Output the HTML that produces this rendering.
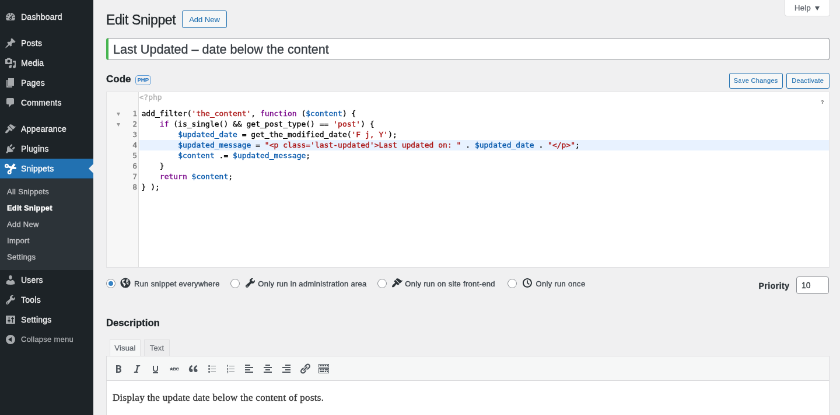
<!DOCTYPE html>
<html lang="en">
<head>
<meta charset="utf-8">
<title>Edit Snippet</title>
<style>
html,body{margin:0;padding:0;background:#f0f0f1;overflow:hidden;}
body{width:840px;height:415px;position:relative;}
#stage{position:absolute;left:0;top:0;width:1440px;height:712px;transform:scale(0.583333);transform-origin:0 0;will-change:transform;
  font-family:"Liberation Sans",Arial,sans-serif;font-size:13px;line-height:1.4;color:#3c434a;background:#f0f0f1;overflow:hidden;-webkit-text-stroke:0.35px currentColor;}
#stage *{box-sizing:border-box;}
/* ---------- sidebar ---------- */
#menu{position:absolute;left:0;top:0;width:160px;height:712px;background:#1d2327;}
#menu .mi{position:absolute;left:0;width:160px;height:34px;color:#f0f0f1;font-size:14px;line-height:34px;padding-left:36px;white-space:nowrap;letter-spacing:.25px;}
#menu .mi svg{position:absolute;left:8px;top:7px;width:20px;height:20px;fill:#a7aaad;}
#menu .mi.cur{background:#2271b1;color:#fff;}
#menu .mi.cur svg{fill:#fff;}
#menu .mi.cur:after{content:"";position:absolute;right:0;top:9px;border:8px solid transparent;border-right-color:#f0f0f1;}
#menu .sub{position:absolute;left:0;top:306.5px;width:160px;height:156px;background:#2c3338;}
#menu .si{position:absolute;left:12px;color:#c3c4c7;font-size:13px;line-height:18px;white-space:nowrap;letter-spacing:.28px;margin-top:-.500px;}
#menu .si.on{color:#fff;font-weight:bold;letter-spacing:.15px;}
#menu .col{color:#a7aaad;font-size:13px;}
/* ---------- content ---------- */
#help{position:absolute;left:1345px;top:-1px;width:77.500px;height:29.300px;background:#fff;border:1px solid #dcdcde;border-top:none;border-radius:0 0 4px 4px;color:#646970;font-size:13px;line-height:29.500px;padding-left:16px;letter-spacing:.3px;}
#help i{position:absolute;left:51px;top:11.500px;border:4.800px solid transparent;border-top:7.500px solid #50575e;border-bottom:none;}
h1{position:absolute;left:182px;top:19px;margin:0;letter-spacing:-.4px;font-size:23px;font-weight:400;line-height:30px;color:#1d2327;white-space:nowrap;}
.btn{position:absolute;border:1px solid #2271b1;border-radius:3px;background:#f6f7f7;color:#2271b1;font-size:13px;white-space:nowrap;text-align:center;-webkit-text-stroke:.15px currentColor;}
#addnew{left:312px;top:18px;width:77px;height:30px;line-height:29px;}
#title{position:absolute;left:182px;top:65px;width:1240px;height:38px;background:#fff;border:1px solid #8c8f94;border-left:4px solid #46b450;border-radius:4px;font-size:21.600px;line-height:38.400px;padding-left:8px;color:#353b41;white-space:nowrap;}
h2{position:absolute;margin:0;font-size:17px;font-weight:bold;color:#1d2327;line-height:24px;white-space:nowrap;}
#php{position:absolute;left:231.500px;top:128.600px;width:27.500px;height:17px;border:1.700px solid #5a9ad6;border-radius:5px;color:#2b79c2;font-size:9.500px;font-weight:bold;line-height:13.800px;text-align:center;-webkit-text-stroke:.2px currentColor;}
#save{left:1249.500px;top:125.300px;width:92.500px;height:26.500px;line-height:24.500px;font-size:11px;letter-spacing:.3px;}
#deact{left:1347.500px;top:125.300px;width:74.500px;height:26.500px;line-height:24.500px;font-size:11px;letter-spacing:.3px;}
/* code editor */
#cm{position:absolute;left:182px;top:156.500px;width:1240px;height:302.500px;background:#fff;border:1px solid #e2e2e4;overflow:hidden;}
#cm .gut{position:absolute;left:0;top:0;width:55px;height:300px;background:#f7f7f7;border-right:1px solid #ddd;}
#cm .php0{position:absolute;left:55.500px;top:0px;font-family:"DejaVu Sans Mono","Liberation Mono",monospace;font-size:13px;line-height:18px;color:#b0b0b0;}
#cm .hl{position:absolute;left:56px;top:82.500px;width:1182px;height:18px;background:#e8f2ff;}
#cm .hlg{position:absolute;left:0;top:82px;width:55px;height:18px;background:#e8f2ff;}
#cm pre{position:absolute;margin:0;left:59.500px;top:28.600px;font-family:"DejaVu Sans Mono","Liberation Mono",monospace;font-size:13px;line-height:18px;color:#000;}
#cm .ln{position:absolute;left:30px;top:28.600px;width:22px;text-align:right;font-family:"DejaVu Sans Mono","Liberation Mono",monospace;font-size:13px;line-height:18px;color:#777;white-space:pre;}
#cm .fold{position:absolute;left:16.500px;color:#999;font-size:11.500px;line-height:18px;-webkit-text-stroke:0;}
.k{color:#708;} .v{color:#05a;} .s{color:#a11;}
#cm .q{position:absolute;right:8.500px;top:11px;font-size:9px;line-height:12px;color:#666;font-weight:bold;-webkit-text-stroke:0;}
/* scope row */
.rad{position:absolute;top:478.300px;width:16px;height:16px;border:1px solid #8c8f94;border-radius:50%;background:#fff;}
.rad.on:after{content:"";position:absolute;left:3px;top:3px;width:8px;height:8px;border-radius:50%;background:#3582c4;}
.rl{position:absolute;top:477.500px;font-size:13px;line-height:18px;color:#3c434a;white-space:nowrap;letter-spacing:.3px;}
.ric{position:absolute;top:475.300px;width:20px;height:20px;fill:#2c3338;}
#prl{position:absolute;left:1300.500px;top:480px;font-size:14px;font-weight:bold;color:#2c3338;line-height:20px;letter-spacing:.5px;white-space:nowrap;}
#pri{position:absolute;left:1365px;top:473.500px;width:56px;height:30px;border:1px solid #8c8f94;border-radius:4px;background:#fff;font-size:14px;line-height:28px;padding-left:8px;color:#2c3338;}
/* editor */
.tab{position:absolute;top:582.300px;height:29px;border:1px solid #e0e0e2;border-bottom:none;font-size:13px;line-height:27.500px;color:#646970;text-align:center;letter-spacing:.2px;-webkit-text-stroke:.2px currentColor;}
#tv{left:187.600px;width:53.700px;background:#f6f7f7;color:#5a6068;height:30px;}
#tt{left:247.300px;width:43.500px;background:#ededee;}
#tb{position:absolute;left:182px;top:610px;width:1240px;height:43px;background:#f6f7f7;border:1px solid #dcdcde;}
#tb svg{position:absolute;top:10.500px;width:20px;height:20px;fill:#50575e;}
#ed{position:absolute;left:182px;top:652px;width:1240px;height:80px;background:#fff;border:1px solid #dcdcde;border-top:1.500px solid #d5d5d7;}
#ed p{position:absolute;left:10px;top:17px;margin:0;font-family:"Liberation Serif",Georgia,serif;font-size:17px;line-height:24px;color:#333;white-space:nowrap;letter-spacing:.3px;}
</style>
</head>
<body>
<div id="stage">
  <div id="menu">
    <div class="mi" style="top:12px"><svg viewBox="0 0 20 20"><path d="M3.76 16h12.48A7.998 7.998 0 0 0 10 3a7.998 7.998 0 0 0-6.24 13zM10 4c.55 0 1 .45 1 1s-.45 1-1 1-1-.45-1-1 .45-1 1-1zM6 6c.55 0 1 .45 1 1s-.45 1-1 1-1-.45-1-1 .45-1 1-1zm8 0c.55 0 1 .45 1 1s-.45 1-1 1-1-.45-1-1 .45-1 1-1zm-5.37 5.55L12 7v6c0 1.1-.9 2-2 2s-2-.9-2-2c0-.57.24-1.08.63-1.45zM4 10c.55 0 1 .45 1 1s-.45 1-1 1-1-.45-1-1 .45-1 1-1zm12 0c.55 0 1 .45 1 1s-.45 1-1 1-1-.45-1-1 .45-1 1-1zm-5 3c0-.55-.45-1-1-1s-1 .45-1 1 .45 1 1 1 1-.45 1-1z"/></svg>Dashboard</div>
    <div class="mi" style="top:57px"><svg viewBox="0 0 20 20"><path d="M10.44 3.02l1.82-1.82 6.36 6.35-1.83 1.82c-1.05-.68-2.48-.57-3.41.36l-.75.75c-.92.93-1.04 2.35-.35 3.41l-1.83 1.82-2.41-2.41-2.8 2.79c-.42.42-3.38 2.71-3.8 2.29s1.86-3.39 2.28-3.81l2.79-2.79L4.1 9.36l1.83-1.82c1.05.69 2.48.57 3.4-.36l.75-.75c.93-.92 1.05-2.35.36-3.41z"/></svg>Posts</div>
    <div class="mi" style="top:91px"><svg viewBox="0 0 20 20"><path d="M13 11V4c0-.55-.45-1-1-1h-1.67L9 1H5L3.67 3H2c-.55 0-1 .45-1 1v7c0 .55.45 1 1 1h10c.55 0 1-.45 1-1zM7 4.5c1.38 0 2.5 1.12 2.5 2.5S8.380 9.5 7 9.500 4.500 8.380 4.500 7 5.620 4.500 7 4.500zM14 6h5v10.500c0 1.380-1.120 2.500-2.500 2.500S14 17.880 14 16.500s1.120-2.500 2.500-2.500c.170 0 .340.020.500.050V9h-3V6zm-4 8.050V13h2v3.500c0 1.380-1.120 2.500-2.500 2.500S7 17.880 7 16.500 8.120 14 9.500 14c.170 0 .340.020.500.050z"/></svg>Media</div>
    <div class="mi" style="top:125px"><svg viewBox="0 0 20 20"><path d="M6 15V2h10v13H6zm-1 1h8v2H3V5h2v11z"/></svg>Pages</div>
    <div class="mi" style="top:159px"><svg viewBox="0 0 20 20"><path d="M5 2h9c1.100 0 2 .900 2 2v7c0 1.100-.900 2-2 2h-2l-5 5v-5H5c-1.100 0-2-.900-2-2V4c0-1.100.900-2 2-2z"/></svg>Comments</div>
    <div class="mi" style="top:204px"><svg viewBox="0 0 20 20"><path d="M14.480 11.060L7.410 3.990l1.500-1.500c.500-.560 2.300-.470 3.510.320 1.210.800 1.430 1.280 2.910 2.100 1.180.640 2.450 1.260 4.450.850zm-.710.710L6.700 4.700 4.930 6.470c-.390.390-.390 1.020 0 1.410l1.060 1.060c.390.390.390 1.030 0 1.420-.600.600-1.430 1.110-2.210 1.690-.350.260-.700.530-1.010.840C1.430 14.230.400 16.080 1.400 17.070c.990 1 2.840-.030 4.180-1.360.310-.310.580-.660.850-1.020.570-.780 1.080-1.610 1.690-2.210.390-.390 1.020-.390 1.410 0l1.060 1.060c.390.390 1.020.390 1.410 0z"/></svg>Appearance</div>
    <div class="mi" style="top:238px"><svg viewBox="0 0 20 20"><path d="M13.110 4.360L9.870 7.600 8 5.730l3.240-3.240c.350-.340 1.050-.200 1.560.320.520.510.660 1.210.310 1.550zm-8 1.770l.910-1.120 9.010 9.010-1.190.840c-.710.710-2.630 1.160-3.820 1.160H6.140L4.900 17.260c-.590.590-1.540.590-2.120 0-.590-.580-.590-1.530 0-2.120l1.240-1.240v-3.880c0-1.130.400-3.190 1.090-3.890zm7.260 3.970l3.240-3.240c.340-.350 1.040-.210 1.550.310.520.510.660 1.210.310 1.550l-3.240 3.250z"/></svg>Plugins</div>
    <div class="mi cur" style="top:272px"><svg viewBox="0 0 20 20"><circle cx="3.500" cy="5.400" r="2.400" fill="none" stroke="#fff" stroke-width="2.400"/><circle cx="8.200" cy="16.200" r="2.400" fill="none" stroke="#fff" stroke-width="2.400"/><path d="M5.600 4.800L11.300 6.400 15.400 1.200 18.600 3.200 15.800 7.000 19.800 7.400 19.800 11.100 13.600 10.700 10.400 15.200 7.600 13.500 10.000 9.800 5.000 7.800z"/></svg>Snippets</div>
    <div class="sub"></div>
    <div class="si" style="top:320px">All Snippets</div>
    <div class="si on" style="top:348px">Edit Snippet</div>
    <div class="si" style="top:376px">Add New</div>
    <div class="si" style="top:404px">Import</div>
    <div class="si" style="top:432px">Settings</div>
    <div class="mi" style="top:462.7px"><svg viewBox="0 0 20 20"><path d="M10 9.250c-2.270 0-2.730-3.440-2.730-3.440C7 4.020 7.820 2 9.970 2c2.160 0 2.980 2.020 2.710 3.810 0 0-.410 3.440-2.680 3.440zm0 2.570L12.720 10c2.390 0 4.520 2.330 4.520 4.530v2.490s-3.650 1.130-7.240 1.130c-3.650 0-7.240-1.130-7.240-1.130v-2.490c0-2.250 1.940-4.480 4.470-4.480z"/></svg>Users</div>
    <div class="mi" style="top:496.7px"><svg viewBox="0 0 20 20"><path d="M16.680 9.770c-1.340 1.340-3.300 1.670-4.950.990l-5.410 6.520c-.990.990-2.590.990-3.580 0s-.990-2.590 0-3.570l6.520-5.420c-.680-1.650-.350-3.610.990-4.950 1.280-1.280 3.120-1.620 4.720-1.060l-2.890 2.890 2.820 2.820 2.860-2.870c.530 1.580.180 3.390-1.080 4.650zM3.810 16.210c.400.390 1.040.390 1.430 0 .400-.400.400-1.040 0-1.430-.390-.400-1.030-.400-1.430 0-.390.390-.390 1.030 0 1.430z"/></svg>Tools</div>
    <div class="mi" style="top:530.7px"><svg viewBox="0 0 20 20"><rect x="2" y="3" width="16" height="14" rx="1"/><g fill="#1d2327"><rect x="6.800" y="5" width="1.400" height="10" rx=".6"/><rect x="5" y="11" width="5" height="2" rx="1"/><rect x="12.800" y="5" width="1.400" height="10" rx=".6"/><rect x="11" y="7" width="5" height="2" rx="1"/></g></svg>Settings</div>
    <div class="mi col" style="top:564.7px"><svg viewBox="0 0 20 20"><path d="M10 2a8 8 0 1 0 0 16 8 8 0 0 0 0-16zm2 12l-6-4 6-4v8z"/></svg>Collapse menu</div>
  </div>

  <div id="help">Help<i></i></div>
  <h1>Edit Snippet</h1>
  <div class="btn" id="addnew">Add New</div>
  <div id="title">Last Updated – date below the content</div>
  <h2 style="left:182px;top:124px">Code</h2>
  <div id="php">PHP</div>
  <div class="btn" id="save">Save Changes</div>
  <div class="btn" id="deact">Deactivate</div>

  <div id="cm">
    <div class="gut"></div>
    <div class="hl"></div>
    <div class="php0">&lt;?php</div>
    <div class="fold" style="top:28px">▾</div>
    <div class="fold" style="top:46px">▾</div>
    <div class="ln">1
2
3
4
5
6
7
8</div>
<pre>add_filter(<span class="s">'the_content'</span>, <span class="k">function</span> (<span class="v">$content</span>) {
    <span class="k">if</span> (is_single() &amp;&amp; get_post_type() == <span class="s">'post'</span>) {
        <span class="v">$updated_date</span> = get_the_modified_date(<span class="s">'F j, Y'</span>);
        <span class="v">$updated_message</span> = <span class="s">"&lt;p class='last-updated'&gt;Last updated on: "</span> . <span class="v">$updated_date</span> . <span class="s">"&lt;/p&gt;"</span>;
        <span class="v">$content</span> .= <span class="v">$updated_message</span>;
    }
    <span class="k">return</span> <span class="v">$content</span>;
} );</pre>
    <div class="q">?</div>
  </div>

  <div class="rad on" style="left:182.3px"></div>
  <svg class="ric" style="left:205.3px" viewBox="0 0 20 20"><circle cx="10" cy="10" r="8.6"/><path fill="#f0f0f1" d="M4.600 5.200c1.300-.900 2.800-.400 4.200-.900.600.900-.200 1.900-1.200 2.300-.500 1.200-1.800 1.100-2.200 2.300.900.300 2.200.100 2.900 1 .900 1 2.400 1.200 2.200 2.700-.300 1.300-1.500 1.900-2 3.100-.500.700-1.200.300-1.300-.400-.300-1.300-.100-2.700-1.200-3.600-.900-.900-1.500-2-1.700-3.200-.200-1.100-.400-2.300.300-3.300zM12.200 3.400c1.400.200 2.700.900 3.700 2-.800.500-1.700.200-2.400.900-.600.700.300 1.300 1 1.400.700.200 1.500.800 1.300 1.600-.700.500-1.300-.400-2-.500-.800 0-1 1-.400 1.500.800.600 1.900.600 2.500 1.500-.400 1-1.400 1.500-2.200.700-.900-.800-2-1.700-1.800-3 .100-1-.800-1.500-.700-2.500.200-1.300.800-2.400 1-3.600z"/></svg>
  <div class="rl" style="left:230.0px">Run snippet everywhere</div>
  <div class="rad" style="left:394.9px"></div>
  <svg class="ric" style="left:418.6px" viewBox="0 0 20 20"><path d="M16.680 9.770c-1.340 1.340-3.300 1.670-4.950.990l-5.410 6.520c-.990.990-2.590.990-3.580 0s-.990-2.590 0-3.570l6.520-5.420c-.680-1.650-.350-3.610.990-4.950 1.280-1.280 3.120-1.620 4.720-1.060l-2.890 2.890 2.820 2.820 2.860-2.870c.530 1.580.180 3.390-1.080 4.650zM3.810 16.210c.400.390 1.040.390 1.430 0 .400-.400.400-1.040 0-1.430-.390-.400-1.030-.400-1.430 0-.390.390-.390 1.030 0 1.430z"/></svg>
  <div class="rl" style="left:442.3px">Only run in administration area</div>
  <div class="rad" style="left:647.0px"></div>
  <svg class="ric" style="left:670.7px" viewBox="0 0 20 20"><path d="M14.480 11.060L7.410 3.990l1.500-1.500c.500-.560 2.300-.470 3.510.320 1.210.800 1.430 1.280 2.910 2.100 1.180.640 2.450 1.260 4.450.850zm-.710.710L6.700 4.700 4.930 6.470c-.390.390-.390 1.020 0 1.410l1.060 1.060c.390.390.390 1.030 0 1.420-.600.600-1.430 1.110-2.210 1.690-.350.260-.700.530-1.010.840C1.430 14.230.400 16.080 1.400 17.070c.990 1 2.840-.030 4.180-1.360.310-.310.580-.660.850-1.020.570-.780 1.080-1.610 1.690-2.210.390-.390 1.020-.390 1.410 0l1.060 1.060c.390.390 1.020.390 1.410 0z"/></svg>
  <div class="rl" style="left:694.3px">Only run on site front-end</div>
  <div class="rad" style="left:870.2px"></div>
  <svg class="ric" style="left:893.6px" viewBox="0 0 20 20"><path d="M10 2c4.420 0 8 3.580 8 8s-3.580 8-8 8-8-3.580-8-8 3.580-8 8-8zm0 14c3.310 0 6-2.690 6-6s-2.690-6-6-6-6 2.690-6 6 2.690 6 6 6zM9.100 5.500h1.800v4.100l2.900 2.200-1.100 1.400-3.600-2.800z"/></svg>
  <div class="rl" style="left:918.6px">Only run once</div>
  <div id="prl">Priority</div>
  <div id="pri">10</div>

  <h2 style="left:182px;top:542px;font-size:16.700px">Description</h2>
  <div class="tab" id="tv">Visual</div>
  <div class="tab" id="tt">Text</div>
  <div id="tb"><svg viewBox="0 0 20 20" style="left:9.5px"><path d="M6 4v13h4.540c1.370 0 2.460-.330 3.260-1 .800-.660 1.200-1.580 1.200-2.770 0-.840-.170-1.510-.510-2.010s-.900-.850-1.670-1.030v-.090c.570-.100 1.020-.400 1.360-.900s.510-1.130.510-1.910c0-1.140-.390-1.980-1.170-2.500C12.750 4.260 11.500 4 9.780 4H6zm2.570 5.150V6.260h1.360c.730 0 1.270.110 1.610.320.340.220.510.580.510 1.070 0 .540-.160.920-.470 1.150s-.820.350-1.510.350h-1.500zm0 2.190h1.600c1.440 0 2.160.530 2.160 1.610 0 .600-.170 1.050-.510 1.340s-.860.430-1.570.430H8.570v-3.380z"/></svg><svg viewBox="0 0 20 20" style="left:41.5px"><path d="M14.780 6h-2.130l-2.800 9h2.120l-.620 2H4.600l.620-2h2.140l2.800-9H8.030l.620-2h6.750z"/></svg><svg viewBox="0 0 20 20" style="left:73.5px"><path d="M14 5h-2v5.710c0 1.990-1.120 2.980-2.450 2.980-1.320 0-2.550-1-2.550-2.960V5H5v5.870c0 1.910 1 4.540 4.480 4.540 3.490 0 4.520-2.580 4.520-4.500V5zm0 13v-2H5v2h9z"/></svg><svg viewBox="0 0 20 20" style="left:105.5px"><text x="10" y="12.600" text-anchor="middle" font-family="Liberation Sans,sans-serif" font-size="7.200" font-weight="bold" stroke="none">ABC</text><rect x="2" y="9.500" width="16" height="1"/></svg><svg viewBox="0 0 20 20" style="left:137.5px"><path d="M9.490 13.220c0-.740-.200-1.380-.610-1.900-.620-.780-1.830-.880-2.530-.720-.290-1.650 1.110-3.750 2.920-4.650L7.880 4c-2.730 1.300-5.420 4.280-4.960 8.050C3.210 14.430 4.590 16 6.540 16c.850 0 1.560-.250 2.120-.750s.830-1.180.830-2.030zm8.050 0c0-.740-.200-1.380-.610-1.900-.630-.780-1.830-.880-2.530-.720-.290-1.650 1.110-3.750 2.920-4.650L15.930 4c-2.730 1.300-5.410 4.280-4.950 8.050.290 2.380 1.660 3.950 3.610 3.950.850 0 1.560-.250 2.120-.750s.830-1.180.830-2.030z"/></svg><svg viewBox="0 0 20 20" style="left:169.5px"><path d="M5.500 7C4.670 7 4 6.330 4 5.500 4 4.680 4.670 4 5.500 4 6.320 4 7 4.680 7 5.500 7 6.330 6.320 7 5.500 7zM8 5h9v1H8V5zm-2.500 7c-.830 0-1.500-.670-1.500-1.500C4 9.680 4.670 9 5.500 9c.820 0 1.500.680 1.500 1.500 0 .830-.680 1.500-1.500 1.500zM8 10h9v1H8v-1zm-2.500 7c-.830 0-1.500-.670-1.500-1.500 0-.820.670-1.500 1.500-1.500.820 0 1.500.680 1.500 1.500 0 .830-.680 1.500-1.500 1.500zM8 15h9v1H8v-1z"/></svg><svg viewBox="0 0 20 20" style="left:201.5px"><path d="M8 5h9v1H8zM8 10h9v1H8zM8 15h9v1H8zM5 3.500h1V7H5zM4.300 4h1v.800h-1zM4.200 9h1.900v.700H4.200zM5.300 9.600h.800v1.200h-.800zM4.200 10.700h1.900v.700H4.200zM4.200 11.300h.800v1h-.800zM4.200 12h1.900v.700H4.200zM4.200 14h1.900v.700H4.200zM5.300 14.600h.800v2.400h-.800zM4.200 15.500h1.900v.600H4.200zM4.200 16.800h1.900v.700H4.200z"/></svg><svg viewBox="0 0 20 20" style="left:233.5px"><path d="M12 5V3H3v2h9zm5 4V7H3v2h14zm-5 4v-2H3v2h9zm5 4v-2H3v2h14z"/></svg><svg viewBox="0 0 20 20" style="left:265.5px"><path d="M14 5V3H6v2h8zm3 4V7H3v2h14zm-3 4v-2H6v2h8zm3 4v-2H3v2h14z"/></svg><svg viewBox="0 0 20 20" style="left:297.5px"><path d="M17 5V3H8v2h9zm0 4V7H3v2h14zm0 4v-2H8v2h9zm0 4v-2H3v2h14z"/></svg><svg viewBox="0 0 20 20" style="left:329.5px"><path d="M17.740 2.760c1.680 1.690 1.680 4.410 0 6.100l-1.530 1.520c-1.120 1.120-2.700 1.470-4.140 1.090l2.620-2.610.760-.770.760-.760c.840-.840.840-2.200 0-3.040-.840-.850-2.200-.850-3.040 0l-.770.760-3.380 3.380c-.370-1.440-.020-3.020 1.100-4.140l1.520-1.530c1.690-1.680 4.420-1.680 6.100 0zM8.590 13.430l5.340-5.340c.420-.420.420-1.100 0-1.520-.440-.430-1.130-.390-1.530 0l-5.330 5.340c-.420.420-.420 1.100 0 1.520.440.430 1.130.390 1.520 0zm-.760 2.290l4.140-4.150c.380 1.440.030 3.020-1.090 4.140l-1.520 1.530c-1.690 1.680-4.410 1.680-6.100 0-1.680-1.680-1.680-4.420 0-6.100l1.530-1.520c1.120-1.120 2.700-1.470 4.140-1.100l-4.140 4.150c-.850.840-.850 2.200 0 3.050.840.840 2.200.840 3.040 0z"/></svg><svg viewBox="0 0 20 20" style="left:361.5px"><path d="M19 2v6H1V2h18zm-1 5V3H2v4h16zM5 4v2H3V4h2zm3 0v2H6V4h2zm3 0v2H9V4h2zm3 0v2h-2V4h2zm3 0v2h-2V4h2zm2 5v9H1V9h18zm-1 8v-7H2v7h16zM5 11v2H3v-2h2zm3 0v2H6v-2h2zm3 0v2H9v-2h2zm6 0v2h-5v-2h5zm-6 3v2H3v-2h8zm3 0v2h-2v-2h2zm3 0v2h-2v-2h2z"/></svg></div>
  <div id="ed"><p>Display the update date below the content of posts.</p></div>
</div>
</body>
</html>
